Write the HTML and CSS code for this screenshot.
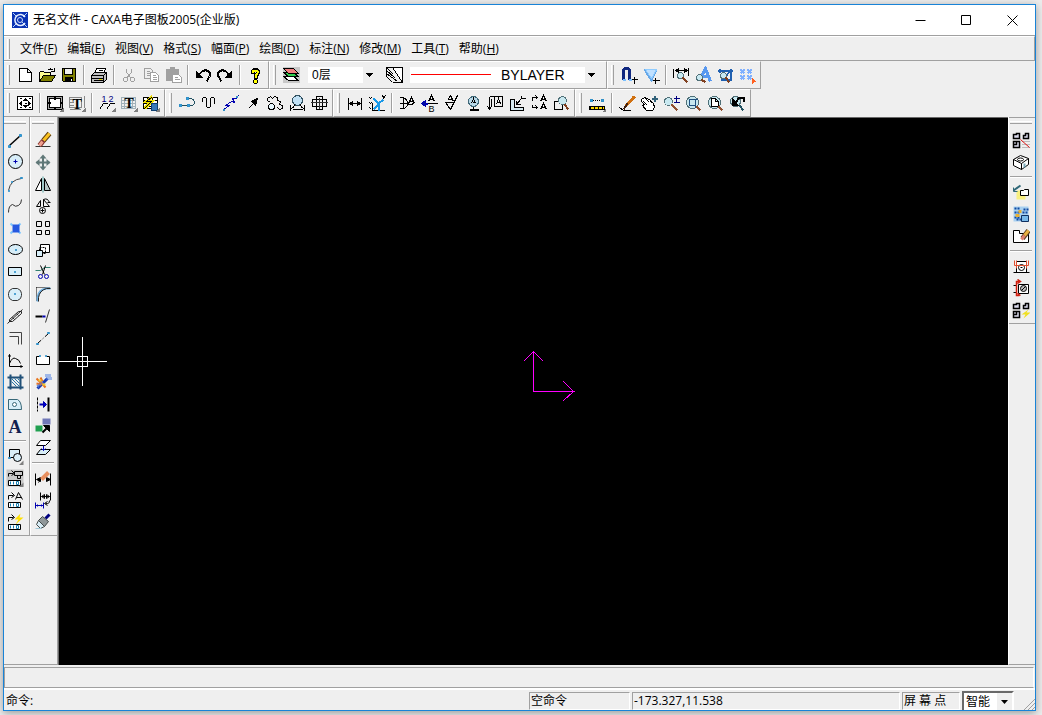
FILE: index.html
```html
<!DOCTYPE html>
<html lang="zh-CN">
<head>
    <meta charset="UTF-8">
    <meta name="viewport" content="width=device-width, initial-scale=1.0">
    <title>无名文件 - CAXA电子图板2005(企业版)</title>
    <link rel="stylesheet" href="styles.css">
</head>
<body>
    <div class="window">
        <header class="titlebar">
            <svg class="logo" viewBox="0 0 16 16"><rect width="16" height="16" fill="#0a32b4" stroke="none"/><path d="M1 1l4 4M15 1l-4 4M1 15l4-4M10 10l5 5" stroke="#b8d4f8"/><path d="M13 5a5.500 5.500 0 1 0 0 6" stroke="#e8f0ff" stroke-width="1.500"/><circle cx="8" cy="8" r="2.500" stroke="#cfe0ff"/></svg>
            <h1>无名文件 - CAXA电子图板2005(企业版)</h1>
            <div class="caption-buttons">
                <button type="button" aria-label="最小化"><svg viewBox="-.5 -.5 11 11"><path d="M0 5h10"/></svg></button>
                <button type="button" aria-label="最大化"><svg viewBox="-.5 -.5 11 11"><path d="M0 0h9v9H0z"/></svg></button>
                <button type="button" aria-label="关闭"><svg viewBox="-.5 -.5 11 11"><path d="M0 0l10 10M10 0L0 10"/></svg></button>
            </div>
        </header>

        <nav class="menubar">
            <span class="grip"></span>
            <a href="#">文件(<u>F</u>)</a>
            <a href="#">编辑(<u>E</u>)</a>
            <a href="#">视图(<u>V</u>)</a>
            <a href="#">格式(<u>S</u>)</a>
            <a href="#">幅面(<u>P</u>)</a>
            <a href="#">绘图(<u>D</u>)</a>
            <a href="#">标注(<u>N</u>)</a>
            <a href="#">修改(<u>M</u>)</a>
            <a href="#">工具(<u>T</u>)</a>
            <a href="#">帮助(<u>H</u>)</a>
        </nav>

        <div class="toolbar-row">
            <!-- 标准工具栏 -->
            <div class="band">
                <span class="grip"></span>
                <button type="button" aria-label="新建"><svg viewBox="-.5 -.5 18 18"><path class="white" d="M3 2h8l4 4v9H3zM11 2v4h4"/></svg></button>
                <button type="button" aria-label="打开"><svg viewBox="-.5 -.5 18 18"><path d="M1 15V6l1-1h3l1 1h6v3" fill="#ffff90"/><path d="M1 15l4-6h12l-4 6z" fill="#808000"/><path d="M9 4q3-3 6 0M16 1v4h-4"/></svg></button>
                <button type="button" aria-label="保存"><svg viewBox="-.5 -.5 18 18"><path d="M2 2h13v13H3l-1-1z" fill="#808000"/><path d="M4 2h8v6H4z" fill="#efefef"/><path class="ink" d="M5 11h7v4H5z"/><path d="M11 12v2" stroke="#fff"/></svg></button>
                <span class="sep"></span>
                <button type="button" aria-label="打印"><svg viewBox="-.5 -.5 18 18"><path class="white" d="M6 2h9l-2 5H4z"/><path d="M8 4h4M7 6h4"/><path d="M1 9l3-3h12v7l-3 3H1z" fill="#c0c0c0"/><path d="M1 9h12v7M13 9l3-3M1 12h12M3 14h9"/><path d="M8 13h3" stroke="#e0d000"/></svg></button>
                <span class="sep"></span>
                <button type="button" aria-label="剪切" disabled><svg class="off" viewBox="-.5 -.5 18 18"><path d="M6 2v4l5 6M11 2v4l-5 6"/><circle cx="5" cy="13" r="2"/><circle cx="12" cy="13" r="2"/></svg></button>
                <button type="button" aria-label="复制" disabled><svg class="off" viewBox="-.5 -.5 18 18"><path d="M2 2h6l2 2v8H2zM4 5h3M4 7h4M4 9h4"/><path class="white" d="M8 6h5l3 3v6H8z"/><path d="M10 9h3M10 11h4M10 13h4"/></svg></button>
                <button type="button" aria-label="粘贴" disabled><svg class="off" viewBox="-.5 -.5 18 18"><path d="M2 3h12v11H2zM6 1h4v3H6z" fill="#a0a0a0"/><path class="white" d="M8 8h6l3 3v5H8z"/><path d="M10 11h3M10 13h5"/></svg></button>
                <span class="sep"></span>
                <button type="button" aria-label="撤销"><svg viewBox="-.5 -.5 18 18"><path class="bold" d="M4 9q4-6 8-5 5 2 3 6l-3 5"/><path class="ink" d="M2 5v6h6z"/></svg></button>
                <button type="button" aria-label="重做"><svg viewBox="-.5 -.5 18 18"><path class="bold" d="M13 9Q9 3 5 4 0 6 2 10l3 5"/><path class="ink" d="M15 5v6H9z"/></svg></button>
                <span class="sep"></span>
                <button type="button" aria-label="帮助"><svg viewBox="-.5 -.5 18 18"><path d="M6 7V5q2-3 5-1q2 3-2 5v3" stroke-width="4"/><path d="M6 6V5q2-2 5 0q1 2-2 4v2" stroke="#ff0" stroke-width="2"/><circle cx="9" cy="15" r="2" fill="#ff0"/></svg></button>
            </div>
            <!-- 颜色图层线型 -->
            <div class="band">
                <span class="grip"></span>
                <button type="button" aria-label="层控制"><svg viewBox="-.5 -.5 18 18"><rect class="none" x="0" y="0" width="17" height="16" fill="#c8c8c8"/><path class="white" d="M1 10h10l5 4H6z"/><path d="M1 6h10l5 4H6z" fill="#30d050"/><path d="M1 2h10l5 5H6z" fill="#f08080"/></svg></button>
                <label class="combo layer-combo">
                    <select aria-label="当前图层"><option>0层</option></select>
                    <span class="drop"><svg viewBox="0 0 7 4"><path class="ink none" d="M0 0h7L3.500 4z"/></svg></span>
                </label>
                <button type="button" aria-label="线型"><svg viewBox="-.5 -.5 18 18"><path class="white" d="M7 1h10v15z"/><path d="M1 1h6l10 15H7M1 1l7 7M1 4l9 8M1 7l11 8M1 10l6 6M1 1v2M1 4v2M1 7v2"/></svg></button>
                <label class="combo line-combo">
                    <select aria-label="线型选择"><option>BYLAYER</option></select>
                    <span class="line-sample"></span>
                    <span class="drop"><svg viewBox="0 0 7 4"><path class="ink none" d="M0 0h7L3.500 4z"/></svg></span>
                </label>
            </div>
            <!-- 捕捉设置 -->
            <div class="band">
                <span class="grip"></span>
                <button type="button" aria-label="捕捉点"><svg viewBox="-.5 -.5 18 18"><path d="M3 13V5q0-3 3-3t3 3v8" stroke="#102880" stroke-width="3"/><path d="M2 13h3M8 13h3" stroke="#7ac0ff" stroke-width="2"/><path d="M14 10v7M11 13h6"/></svg></button>
                <button type="button" aria-label="过滤设置"><svg viewBox="-.5 -.5 18 18"><path d="M2 3l7 11 5-11M6 3l3 6" stroke="#68a8e8" stroke-width="2"/><path d="M3 3h11l-5 9z" fill="#c0e0ff" stroke="#90ccff"/><path d="M13 11v6M10 14h7"/></svg></button>
                <span class="sep"></span>
                <button type="button" aria-label="查询距离"><svg viewBox="-.5 -.5 18 18"><path d="M1 2v9M16 1v8M3 4h12M3 4l3-2v4zM15 4l-3-2v4z"/><circle class="glass" cx="8" cy="9" r="3"/><path d="M10 11l5 5" stroke="#804020" stroke-width="2"/></svg></button>
                <button type="button" aria-label="查询属性"><svg viewBox="-.5 -.5 18 18"><path d="M5 14L11 2l5 13M8 10h6" stroke="#5898f0" stroke-width="3"/><circle class="glass" cx="5" cy="11" r="3"/><path d="M7 13l4 3" stroke="#804020" stroke-width="2"/></svg></button>
                <button type="button" aria-label="查询面积"><svg viewBox="-.5 -.5 18 18"><path d="M1 4h15M3 2v4M4 13h11M14 2v12M14 4l-5 6" stroke="#2060b0" stroke-width="2"/><circle class="glass" cx="7" cy="9" r="3"/><path d="M9 11l4 5" stroke="#804020" stroke-width="2"/></svg></button>
                <button type="button" aria-label="查询坐标"><svg viewBox="-.5 -.5 18 18"><path d="M2 3l4 4M6 3L2 7M9 3l4 4M13 3L9 7M2 9l4 4M6 9l-4 4M9 9l4 4M13 9l-4 4" stroke="#80b0ff" stroke-width="2"/><path class="none" d="M13 11l4 4-4 3z" fill="#ff6020"/></svg></button>
            </div>
        </div>

        <div class="toolbar-row">
            <!-- 图幅操作 -->
            <div class="band">
                <span class="grip"></span>
                <button type="button" aria-label="图纸幅面"><svg viewBox="-.5 -.5 18 18"><path class="white" d="M1 2h15v13H1z"/><path class="ink" d="M7 6l2-2 2 2zM7 11l2 2 2-2zM5 7L3 9l2 2zM12 7l2 2-2 2z"/><path d="M8 9h2M3 4h2M12 4h2M3 13h2M12 13h2"/></svg></button>
                <span class="sep"></span>
                <button type="button" aria-label="图框设置"><svg viewBox="-.5 -.5 18 18"><path d="M1 2h15v13H1z" fill="#a8a8a8"/><path class="white" d="M3 4h11v9H3z"/><path class="bold" d="M8 2v3M8 12v3M1 8h3M13 8h3"/><path class="fly" d="M17 13v5h-5z"/></svg></button>
                <button type="button" aria-label="标题栏"><svg viewBox="-.5 -.5 18 18"><path d="M1 3h12v10H1zM16 1v12M1 15h11" stroke="#888"/><path d="M1 5h4M1 8h4M1 11h4" stroke="#888"/><text class="serif" x="4" y="14">T</text><path class="fly" d="M17 13v5h-5z"/></svg></button>
                <span class="sep"></span>
                <button type="button" aria-label="零件序号"><svg viewBox="-.5 -.5 18 18"><text class="num" x="3" y="7">1</text><text class="num" x="10" y="7">2</text><path d="M1 15l4-6h4M8 15l4-6h4"/><path class="fly" d="M17 13v5h-5z"/></svg></button>
                <button type="button" aria-label="明细表"><svg viewBox="-.5 -.5 18 18"><path d="M1 3h14v11H1zM1 6h14M1 9h14M1 12h14M4 3v11M12 3v11" stroke="#a0b0b8"/><text class="serif" x="4" y="13">T</text><path class="fly" d="M17 13v5h-5z"/></svg></button>
                <button type="button" aria-label="明细表数据库"><svg viewBox="-.5 -.5 18 18"><path class="white" d="M1 3h14v11H1z"/><path d="M1 6h14M1 9h14M1 12h14M5 3v11M10 3v11"/><path d="M10 2L4 7h5l-7 7" stroke="#f0e000" stroke-width="3"/><path d="M10 2L4 7h5l-7 7"/><path d="M9 9h6v7H9z" fill="#3878b8" stroke="#104070"/><path class="fly" d="M17 13v5h-5z"/></svg></button>
            </div>
            <!-- 绘图工具II -->
            <div class="band">
                <span class="grip"></span>
                <button type="button" aria-label="轮廓线"><svg viewBox="-.5 -.5 18 18"><path d="M2 11h8M9 4h3q4 1 4 4t-4 3h-2" stroke="#205060"/><path class="node" d="M1 10h2v2H1zM9 10h2v2H9zM8 3h2v2H8z"/></svg></button>
                <button type="button" aria-label="波浪线"><svg viewBox="-.5 -.5 18 18"><path d="M2 7V5q0-2 2-2t2 2v6q0 2 2 2t2-2V5q0-2 2-2t2 2v4"/></svg></button>
                <button type="button" aria-label="双折线"><svg viewBox="-.5 -.5 18 18"><path class="blue" d="M1 15l6-4H3l6-4 3 1-2-4h4l2-3"/><path class="node" d="M1 15h1v1H1zM14 2h1v1h-1z"/></svg></button>
                <button type="button" aria-label="箭头"><svg viewBox="-.5 -.5 18 18"><path d="M4 14l7-7"/><path class="ink" d="M13 4l-6 3 4 4z"/></svg></button>
                <button type="button" aria-label="齿轮"><svg viewBox="-.5 -.5 18 18"><path d="M1 6V4l3-2 2 2 2-2 3 1v3l3 1-1 3 3 1v3l-3 1-2-2M1 6l3 2"/><circle cx="5" cy="12" r="3" fill="#e8f8ff"/></svg></button>
                <button type="button" aria-label="圆弧拟合"><svg viewBox="-.5 -.5 18 18"><circle cx="9" cy="6" r="5" fill="#c0e0f4" stroke="#305060"/><path d="M2 10v6M2 14q3 0 4-4M16 10v6M16 14q-3 0-4-4M4 15h10"/></svg></button>
                <button type="button" aria-label="孔轴"><svg viewBox="-.5 -.5 18 18"><path d="M2 5h14v7H2zM6 2h6v13H6z"/><path d="M0 8h18M9 3v11" stroke="#333"/></svg></button>
            </div>
            <!-- 标注工具 -->
            <div class="band">
                <span class="grip"></span>
                <button type="button" aria-label="尺寸标注"><svg viewBox="-.5 -.5 18 18"><path d="M3 9h11M2 3v12M15 3v12"/><path class="ink" d="M3 9l3-2v4zM14 9l-3-2v4z"/></svg></button>
                <button type="button" aria-label="坐标标注"><svg viewBox="-.5 -.5 18 18"><path d="M4 8v8h12M1 3l2 2M3 3L1 5M1 8l2 2M3 8l-2 2M14 1l1 2M17 1l-3 4M1 13l2 2"/><path d="M10 16V9l5-4M10 10l-5 5M5 4l5 5" stroke="#1898e8" stroke-width="2"/></svg></button>
                <span class="sep"></span>
                <button type="button" aria-label="倒角标注"><svg viewBox="-.5 -.5 18 18"><path d="M1 3h4q4 2 4 6t-4 5H1M5 3v11M1 9h7l4 1 4-1M10 9l3-6 3 6M11 7h4"/></svg></button>
                <button type="button" aria-label="引出说明"><svg viewBox="-.5 -.5 18 18"><path d="M8 7l3-6 3 6M9 5h4M6 9h11"/><path d="M1 9h6" class="blue bold"/><path class="blue" d="M1 9l4-3v6z" fill="#0010a0"/><text class="letter" x="8" y="17">B</text></svg></button>
                <button type="button" aria-label="粗糙度"><svg viewBox="-.5 -.5 18 18"><path d="M3 8h9M3 8l5 7 7-14M5 6l3-5 3 6M6 5h4"/></svg></button>
                <button type="button" aria-label="基准代号"><svg viewBox="-.5 -.5 18 18"><circle cx="9" cy="7" r="5" fill="#b8d8e8" stroke="#406878"/><path d="M7 9l2-5 2 5M8 8h2M9 12v3"/><path class="bold" d="M5 15h9"/></svg></button>
                <button type="button" aria-label="形位公差"><svg viewBox="-.5 -.5 18 18"><path d="M3 2h13v10H8V2M3 2v12M1 12l2 3 2-3M5 4v7M10 10l2-6 2 6M11 8h3"/></svg></button>
                <button type="button" aria-label="焊接符号"><svg viewBox="-.5 -.5 18 18"><path d="M2 5h4v8h9v3H2z" fill="#d8eaf0"/><path d="M13 4L8 10M8 6v4h4M13 4h4M13 4V1"/></svg></button>
                <button type="button" aria-label="标注修改"><svg viewBox="-.5 -.5 18 18"><path d="M2 6V3h5M5 1l2 2-2 2M2 10v3h5M5 11l2 2-2 2M10 7l3-6 3 6M11 5h4M10 15l3-6 3 6M11 13h4"/></svg></button>
                <button type="button" aria-label="标注查看"><svg viewBox="-.5 -.5 18 18"><path d="M2 7h8v8H2z"/><circle class="glass" cx="10" cy="6" r="4"/><path d="M12 10l4 5" stroke="#804020" stroke-width="2"/></svg></button>
            </div>
            <!-- 常用工具 -->
            <div class="band">
                <span class="grip"></span>
                <button type="button" aria-label="两点距离"><svg viewBox="-.5 -.5 18 18"><path d="M2 6h13" stroke-dasharray="1 1"/><path class="node" d="M2 5h2v2H2zM13 5h2v2h-2z"/><path class="ink" d="M1 12h15v3H1z"/><path d="M2 13h13" stroke="#ffd800" stroke-width="2" stroke-dasharray="3 1"/><path class="fly" d="M18 13v5h-5z"/></svg></button>
                <span class="sep"></span>
                <button type="button" aria-label="重画"><svg viewBox="-.5 -.5 18 18"><path d="M1 13l4 3h7"/><path d="M16 2L8 11" stroke="#d07010" stroke-width="3"/><path d="M9 9l-4 6" stroke="#402010" stroke-width="2"/></svg></button>
                <button type="button" aria-label="动态平移"><svg viewBox="-.5 -.5 18 18"><path class="white" d="M1 5l3-2 5 2 2 2 2 2 1 4-2 3H6l-4-5 2-1-3-3z"/><path d="M4 3l5 5M3 7l4 4M9 5l3 4"/><path d="M14 1v6M11 4h6" stroke="#306078" stroke-width="2"/></svg></button>
                <button type="button" aria-label="动态缩放"><svg viewBox="-.5 -.5 18 18"><circle class="glass" cx="6" cy="7" r="4"/><path d="M9 10l6 6" stroke="#905030" stroke-width="2"/><path d="M14 1v6M11 4h6M11 8h6" stroke="#000080"/></svg></button>
                <button type="button" aria-label="窗口缩放"><svg viewBox="-.5 -.5 18 18"><circle class="glass" cx="8" cy="8" r="6"/><path d="M5 5h6v6H5zM4 5h9M11 4v9" stroke="#205080"/><path d="M12 12l4 4" stroke="#905030" stroke-width="2"/></svg></button>
                <button type="button" aria-label="显示全部"><svg viewBox="-.5 -.5 18 18"><circle class="glass" cx="8" cy="8" r="6"/><path class="white" d="M5 4h4l3 3v5H5zM9 4v3h3"/><path d="M12 12l4 4" stroke="#905030" stroke-width="2"/></svg></button>
                <button type="button" aria-label="显示回溯"><svg viewBox="-.5 -.5 18 18"><circle class="glass" cx="7" cy="7" r="5"/><path class="bold" d="M7 8l4-5h4v4"/><path class="ink" d="M4 4v7h6z"/><path d="M11 11l4 5" stroke="#205060" stroke-width="2"/></svg></button>
            </div>
        </div>

        <main class="workspace">
            <div class="docks">
                <!-- 绘图工具 -->
                <div class="dock">
                    <span class="grip"></span>
                    <button type="button" aria-label="直线"><svg viewBox="-.5 -.5 18 18"><path d="M3 14L14 4" stroke-width="1.500"/><path class="node" d="M2 14h2v2H2zM13 3h2v2h-2z"/></svg></button>
                    <button type="button" aria-label="圆"><svg viewBox="-.5 -.5 18 18"><circle class="lite" cx="9" cy="8" r="7"/><path class="blue" d="M9 6v4M7 8h4"/></svg></button>
                    <button type="button" aria-label="圆弧"><svg viewBox="-.5 -.5 18 18"><path d="M2 15Q4 4 15 3" stroke="#444"/><path class="node" d="M2 15h1v1H2zM5 6h1v1H5zM14 2h2v1h-2z"/></svg></button>
                    <button type="button" aria-label="样条"><svg viewBox="-.5 -.5 18 18"><path d="M2 15q0-7 4-8 3 3 6 1 3-2 3-6" stroke="#333"/></svg></button>
                    <button type="button" aria-label="点"><svg viewBox="-.5 -.5 18 18"><path d="M4 4l2 2M14 4l-2 2M4 14l2-2M14 14l-2-2" stroke="#80c8ff" stroke-width="2"/><path class="none" d="M6 5h7v8H6z" fill="#2458e0"/></svg></button>
                    <button type="button" aria-label="椭圆"><svg viewBox="-.5 -.5 18 18"><ellipse class="lite" cx="9" cy="8" rx="7" ry="5"/><path class="node" d="M9 8h1v1H9z"/></svg></button>
                    <button type="button" aria-label="矩形"><svg viewBox="-.5 -.5 18 18"><path class="lite" d="M2 4h13v8H2z"/><path class="node" d="M8 8h1v1H8z"/></svg></button>
                    <button type="button" aria-label="正多边形"><svg viewBox="-.5 -.5 18 18"><path class="lite" d="M6 3h5l3 2 1 3v2l-1 3-3 2H6l-3-2-1-3V8l1-3z" stroke="#333"/><path class="node" d="M8 8h1v1H8z"/></svg></button>
                    <button type="button" aria-label="中心线"><svg viewBox="-.5 -.5 18 18"><path d="M3 12l9-8h3v2l-9 8H3zM1 16L16 2M6 10l2 2M10 6l2 2" stroke="#222"/></svg></button>
                    <button type="button" aria-label="等距线"><svg viewBox="-.5 -.5 18 18"><path d="M3 3h12v12M3 7h9v8" stroke="#444"/></svg></button>
                    <button type="button" aria-label="公式曲线"><svg viewBox="-.5 -.5 18 18"><path d="M3 3v12h13M2 5l1-2 1 2M14 14l2 1-2 1M3 12q3-7 6-5 4 1 5 5"/></svg></button>
                    <button type="button" aria-label="剖面线"><svg viewBox="-.5 -.5 18 18"><path d="M1 4h16M1 14h16M4 1v15M14 1v15" stroke="#205078" stroke-width="2"/><path d="M5 8l5 5M5 5l8 8M8 5l5 5M11 5l2 2" stroke="#2878a8"/></svg></button>
                    <button type="button" aria-label="填充"><svg viewBox="-.5 -.5 18 18"><path class="lite" d="M2 4h9q4 2 4 10H2z" stroke="#386878"/><circle cx="8" cy="9" r="2" stroke="#386878" fill="#fff"/></svg></button>
                    <button type="button" aria-label="文字"><svg viewBox="-.5 -.5 18 18"><text class="big-a" x="2" y="15">A</text></svg></button>
                    <span class="sep"></span>
                    <button type="button" aria-label="块操作"><svg viewBox="-.5 -.5 18 18"><path class="lite" d="M3 2h10v8H3z"/><circle class="lite" cx="11" cy="10" r="4"/><path class="node" d="M2 10h2v1H2z"/><path class="fly" d="M17 13v5h-5z"/></svg></button>
                    <button type="button" aria-label="图库"><svg viewBox="-.5 -.5 18 18"><rect class="none" x="0" y="0" width="17" height="17" fill="#c8c8c8"/><path d="M2 7V4h5M5 1l3 3-3 2M8 2h8v4H8zM11 6h3v3h-3z"/><path class="white" d="M2 11h12v5H2z"/><path d="M4 12v3M7 12v3M10 12h2v3h-2z" stroke="#1880b0"/><path class="fly" d="M17 13v5h-5z"/></svg></button>
                    <button type="button" aria-label="文字库"><svg viewBox="-.5 -.5 18 18"><path d="M2 8V4h5M5 1l3 3-3 2M9 8l3-7 4 7M10 6h5"/><path class="white" d="M2 11h12v5H2z"/><path d="M4 12v3M7 12v3M10 12h2v3h-2z" stroke="#1880b0"/></svg></button>
                    <button type="button" aria-label="快捷库"><svg viewBox="-.5 -.5 18 18"><path d="M2 8V4h5M5 1l3 3-3 2"/><path class="none" d="M14 0L8 6h4l-3 5 8-7h-4z" fill="#ffe000"/><path class="white" d="M2 11h12v5H2z"/><path d="M4 12v3M7 12v3M10 12h2v3h-2z" stroke="#1880b0"/></svg></button>
                </div>
                <!-- 编辑工具 -->
                <div class="dock">
                    <span class="grip"></span>
                    <button type="button" aria-label="删除"><svg viewBox="-.5 -.5 18 18"><path d="M1 15h15" stroke="#333"/><path d="M15 2L9 9" stroke="#604010" stroke-width="5"/><path d="M15 2L9 9" stroke="#f8c020" stroke-width="3"/><path d="M9 9l-4 5" stroke="#803028" stroke-width="5"/><path d="M8 10l-3 4" stroke="#f0a090" stroke-width="3"/></svg></button>
                    <button type="button" aria-label="平移"><svg viewBox="-.5 -.5 18 18"><path d="M8.500 3v12M2 9h13" stroke="#607878" stroke-width="2"/><path class="none" d="M5 5l3.500-4L12 5zM5 13l3.500 4 3.500-4zM5 5.500L1 9l4 3.500zM12 5.500L16 9l-4 3.500z" fill="#607878"/></svg></button>
                    <button type="button" aria-label="镜像"><svg viewBox="-.5 -.5 18 18"><path d="M7 3v12H1z" fill="#fff"/><path d="M10 3v12h6z" fill="#b8c8c8"/><path d="M8.500 1v16" stroke="#50a0a0"/></svg></button>
                    <button type="button" aria-label="旋转"><svg viewBox="-.5 -.5 18 18"><path d="M6 3v6H2zM9 2l6 7H9zM9 2q4-2 6 3M13 5h3"/><circle class="white" cx="8" cy="13" r="3"/><path d="M8 11v4M6 13h4"/></svg></button>
                    <button type="button" aria-label="阵列"><svg viewBox="-.5 -.5 18 18"><path d="M2 2h5v5H2zM11 2h4v5h-4zM2 11h5v4H2zM11 11h4v4h-4z"/></svg></button>
                    <button type="button" aria-label="比例缩放"><svg viewBox="-.5 -.5 18 18"><path class="white" d="M6 3h9v8H6z"/><path class="lite" d="M2 9h6v6H2z"/><path d="M5 9V6h6v6H8" stroke-dasharray="2 1"/></svg></button>
                    <button type="button" aria-label="裁剪"><svg viewBox="-.5 -.5 18 18"><path d="M1 7h5l4-3h6" stroke="#308070"/><path d="M6 2l4 9M11 2L8 11"/><circle class="blue" cx="6" cy="13" r="2"/><circle class="blue" cx="12" cy="13" r="2"/></svg></button>
                    <button type="button" aria-label="过渡"><svg viewBox="-.5 -.5 18 18"><path d="M2 2h14M2 2v14" stroke-dasharray="1 1"/><path d="M3 16V12Q4 4 12 3h4" stroke="#70b0e0" stroke-width="2"/><path d="M4 16V12Q5 5 12 3h4" stroke="#222"/></svg></button>
                    <button type="button" aria-label="齐边"><svg viewBox="-.5 -.5 18 18"><path d="M1 9h7" stroke-width="2"/><path class="blue" d="M8 9h3" stroke-width="2"/><path d="M11 15l4-13" stroke="#333"/></svg></button>
                    <button type="button" aria-label="打断"><svg viewBox="-.5 -.5 18 18"><path d="M3 14L14 4" stroke-dasharray="5 2 1 2"/><path class="node" d="M2 14h2v1H2zM13 3h2v1h-2z"/></svg></button>
                    <button type="button" aria-label="拉伸"><svg viewBox="-.5 -.5 18 18"><path class="white" d="M5 5H2v8h13V5h-3"/><path class="node" d="M5 4h1v1H5zM11 4h1v1h-1z"/></svg></button>
                    <button type="button" aria-label="打散"><svg viewBox="-.5 -.5 18 18"><path d="M3 15l10-10" stroke="#1838b0" stroke-width="3"/><path d="M2 5l4 4M6 4l2 4M2 10l5 1M5 7l6 7" stroke="#e87020" stroke-width="2"/><path d="M11 2h6M12 5h5M3 13l6-5" stroke="#5080e0" stroke-dasharray="1 1" stroke-width="3"/><path d="M4 7h3M8 11h3" stroke="#f0d030" stroke-width="2"/></svg></button>
                    <button type="button" aria-label="改变线型"><svg viewBox="-.5 -.5 18 18"><path d="M3 2v14" stroke-dasharray="3 1"/><path d="M14 2v14" stroke-width="2"/><path class="blue" d="M5 9h5" stroke-width="2"/><path class="blue" d="M9 6l3 3-3 3z" fill="#0000d0"/></svg></button>
                    <button type="button" aria-label="改变颜色"><svg viewBox="-.5 -.5 18 18"><path class="none" d="M1 8h7v6H1z" fill="#20a050"/><path class="none" d="M8 1h8v6H8z" fill="#7078b8"/><path class="bold" d="M8 15l5-5"/><path class="ink" d="M15 8v6L9 8z"/></svg></button>
                    <button type="button" aria-label="改变图层"><svg viewBox="-.5 -.5 18 18"><path class="white" d="M6 1h10l-5 5H2z"/><path class="lite" d="M6 10h10l-5 5H2z"/><path class="blue" d="M9 6v5M7 9l2 2 2-2"/></svg></button>
                    <span class="sep"></span>
                    <button type="button" aria-label="尺寸编辑"><svg viewBox="-.5 -.5 18 18"><path class="ink" d="M1 4v12M16 4v12M2 10l4-2v4zM16 10l-4-2v4z"/><path d="M14 3L7 10" stroke="#e89060" stroke-width="4"/><path d="M6 10l-2 3"/></svg></button>
                    <button type="button" aria-label="尺寸联动"><svg viewBox="-.5 -.5 18 18"><path d="M6 1v8M16 1v8M7 5h8M7 5l3-2v4zM15 5l-3-2v4zM15 9q0 4-4 3M13 10l-3 2 3 2"/><path class="blue" d="M1 11v6M9 11v6M1 14h8M3 13v2M7 13v2"/></svg></button>
                    <button type="button" aria-label="格式刷"><svg viewBox="-.5 -.5 18 18"><path d="M15 1l-4 4" stroke="#000080" stroke-width="3"/><path d="M8 3l6 5-4 5-6-6z" fill="#90989a" stroke="#404848"/><path class="lite" d="M4 7l6 6-4 2-4-4z" stroke="#404848"/><path d="M1 15h6" stroke="#a0c8d8"/></svg></button>
                </div>
            </div>

            <div class="drawing">
                <svg class="axis" viewBox="-.5 -.5 85 83"><path d="M42 41V1M32 11L42 1l10 10M42 41h41M72 31l10 10-10 9"/></svg>
                <svg class="cursor" viewBox="-.5 -.5 49 51"><path d="M23 0v49M-.5 25h48M18 20h10v10H18z"/></svg>
            </div>

            <div class="docks docks-right">
                <!-- 图库管理 -->
                <div class="dock">
                    <span class="grip"></span>
                    <button type="button" aria-label="提取图符"><svg viewBox="-.5 -.5 18 18"><g stroke-width="1.500"><path d="M1 3h3V2h3v5H1zM11 7V4h2V2h3v5z" fill="#dde"/><path d="M1 10h6v6H1zM4 10v3H1" fill="#dde"/></g><path d="M10 10h7M10 13h7M10 16h7" stroke="#888" stroke-dasharray="1 1"/><path d="M8 8l9 8" stroke="#e01010"/></svg></button>
                    <button type="button" aria-label="定义图符"><svg viewBox="-.5 -.5 18 18"><path class="white" d="M1 6l7-4 8 3v6l-7 5-8-4z"/><path d="M1 6l8 4 7-5M9 10v6"/><ellipse cx="8" cy="6" rx="3" ry="1.500"/><path d="M12 10v4" stroke="#78a8b8" stroke-width="2"/></svg></button>
                    <span class="sep"></span>
                    <button type="button" aria-label="驱动图符"><svg viewBox="-.5 -.5 18 18"><path class="none" d="M4 7h9v9H4z" fill="#f8f080"/><path class="white" d="M8 7h3l1-1h4v6H8z"/><path d="M1 7l7-5" stroke="#306878" stroke-width="2"/><path d="M1 4v4h4" stroke="#306878"/></svg></button>
                    <button type="button" aria-label="图库管理"><svg viewBox="-.5 -.5 18 18"><path class="none" d="M1 1h15v15H1z" fill="#a8d0f0"/><path d="M2 3h6M2 7h5M2 12h6M4 14h5M11 4h5M10 7h6" stroke="#1048a0" stroke-width="2" stroke-dasharray="2 1"/><path d="M3 10h4M6 6h3" stroke="#e8b030" stroke-width="3"/><path d="M9 16v-6h7v6z" fill="#78b8e8" stroke="#103060"/></svg></button>
                    <button type="button" aria-label="图符编辑"><svg viewBox="-.5 -.5 18 18"><path class="white" d="M1 3h6v3h9v9H1z"/><path d="M16 3l-6 8" stroke="#604020" stroke-width="5"/><path d="M16 3l-4 5" stroke="#e8b040" stroke-width="3"/><path d="M12 8l-3 4" stroke="#e08070" stroke-width="3"/></svg></button>
                    <span class="sep"></span>
                    <button type="button" aria-label="构件库"><svg viewBox="-.5 -.5 18 18"><path class="white" d="M4 4h10v11H4z"/><circle cx="9" cy="10" r="3"/><path d="M8 10h2M1 15h4M13 15h4"/><path d="M2 3v5h14V3" stroke="#e05030"/><path d="M4 3v8M14 3v8" stroke="#e05030"/></svg></button>
                    <button type="button" aria-label="转换图符"><svg viewBox="-.5 -.5 18 18"><path class="white" d="M6 5h10v9H6z"/><circle cx="11" cy="9" r="3" fill="#c0c0c0"/><path d="M9 11l4-4M1 6h3M1 13h3"/><path d="M7 2H4v14h3M5 0l3 2-3 2M5 14l3 2" stroke="#d02010" stroke-width="1.500"/></svg></button>
                    <button type="button" aria-label="技术要求库"><svg viewBox="-.5 -.5 18 18"><g stroke-width="1.500"><path d="M1 3h3V2h3v5H1zM11 7V4h2V2h3v5z" fill="#dde"/><path d="M1 10h6v6H1zM4 10v3H1" fill="#dde"/></g><path class="none" d="M16 8l-7 5h4l-2 4 7-6h-4z" fill="#f0e020"/></svg></button>
                </div>
            </div>
        </main>

        <div class="command"></div>

        <footer class="status">
            <span class="prompt">命令:</span>
            <span class="panel panel-cmd">空命令</span>
            <span class="panel panel-pos">-173.327,11.538</span>
            <span class="panel panel-point">屏 幕 点</span>
            <label class="combo snap-combo">
                <select aria-label="捕捉方式"><option>智能</option></select>
                <span class="drop"><svg viewBox="0 0 7 4"><path class="ink none" d="M0 0h7L3.500 4z"/></svg></span>
            </label>
            <svg class="size-grip" viewBox="0 0 12 12"><path d="M1 12L12 1M5 12l7-7M9 12l3-3"/></svg>
        </footer>
    </div>
</body>
</html>
```
FILE: styles.css
```css
* {
    box-sizing: border-box;
}

body {
    display: flex;
    height: 100vh;
    margin: 0;
    padding: 4px 6px 4px 3px;
    overflow: hidden;
    background-color: #ececec;
    color: #000;
    font-family: "Open Sans", "Noto Sans CJK SC", sans-serif;
    font-size: 12px;
    line-height: 16px;
}

.window {
    flex: 1;
    min-width: 0;
    display: flex;
    flex-direction: column;
    overflow: hidden;
    border: 1px solid #1883d7;
    background-color: #efefef;
    box-shadow: 0 2px 8px rgba(0, 0, 0, 0.35);
}

svg {
    display: block;
    fill: none;
    stroke: #000;
}

button {
    display: grid;
    place-items: center;
    width: 22px;
    height: 22px;
    padding: 0;
    border: 0;
    background: none;
}

button svg {
    width: 18px;
    height: 18px;
}

/* 标题栏 */
.titlebar {
    display: flex;
    align-items: center;
    height: 31px;
    padding-left: 8px;
    border-bottom: 1px solid #a0a0a0;
    background-color: #fff;
}

.logo {
    width: 16px;
    height: 16px;
}

.titlebar h1 {
    flex: 1;
    margin: 0 0 0 5px;
    font-size: 12px;
    font-weight: 400;
}

.caption-buttons {
    display: flex;
}

.caption-buttons button {
    width: 46px;
    height: 30px;
}

.caption-buttons svg {
    width: 11px;
    height: 11px;
}

/* 菜单 */
.menubar {
    display: flex;
    align-items: center;
    gap: 10px;
    height: 25px;
    padding-left: 3px;
    border-top: 1px solid #fff;
    border-right: 1px solid #a0a0a0;
    border-bottom: 1px solid #a0a0a0;
}

.menubar a {
    color: #000;
    text-decoration: none;
}

/* 工具栏 */
.toolbar-row {
    display: flex;
    height: 28px;
}

.toolbar-row svg {
    shape-rendering: crispEdges;
}

.band {
    display: flex;
    align-items: center;
    padding: 0 2px 0 3px;
    border-top: 1px solid #fff;
    border-right: 1px solid #a0a0a0;
    border-bottom: 1px solid #a0a0a0;
}

.band + .band {
    border-left: 1px solid #fff;
}

.grip {
    width: 3px;
    height: 20px;
    border-left: 1px solid #fff;
    border-right: 1px solid #a0a0a0;
}

.band .grip {
    margin-right: 4px;
}

.sep {
    width: 2px;
    height: 20px;
    margin: 0 3px;
    border-left: 1px solid #a0a0a0;
    border-right: 1px solid #fff;
}

.combo {
    display: grid;
    align-items: center;
    background-color: #fff;
}

.combo > * {
    grid-area: 1 / 1;
}

.combo select {
    width: 100%;
    height: 16px;
    padding: 0;
    border: 0;
    appearance: none;
    background: none;
    color: #000;
    font: 14px/16px "Liberation Sans", "Noto Sans CJK SC", sans-serif;
}

.drop {
    display: grid;
    place-items: center;
    justify-self: end;
    width: 13px;
    height: 16px;
    background-color: #efefef;
    pointer-events: none;
}

.drop svg {
    width: 7px;
    height: 4px;
}

.layer-combo {
    width: 68px;
    margin: 0 7px 0 6px;
}

.combo.layer-combo select {
    padding-left: 4px;
    font-size: 12px;
}

.line-combo {
    width: 188px;
    margin: 0 6px 0 5px;
}

.combo.line-combo select {
    padding-left: 91px;
}

.line-sample {
    width: 80px;
    height: 1px;
    margin: 0 0 2px 1px;
    background-color: #f00;
    pointer-events: none;
}

/* 图标 */
.white {
    fill: #fff;
}

.ink {
    fill: #000;
}

.none {
    stroke: none;
}

.bold {
    stroke-width: 2;
}

.lite {
    fill: #d8eef8;
}

.blue {
    stroke: #0000b0;
}

.node {
    fill: #30a0e0;
    stroke: #3090c8;
}

.glass {
    fill: #c8e8f0;
    stroke: #507078;
}

.fly {
    fill: #808080;
    stroke: none;
}

.off {
    stroke: #a0a0a0;
}

.serif,
.big-a,
.letter,
.num {
    fill: #000;
    stroke: none;
    font: bold 14px "Liberation Serif", serif;
}

.big-a {
    fill: #102050;
    font-size: 18px;
}

.letter {
    font: 9px "Liberation Sans", sans-serif;
}

.num {
    fill: #000080;
    font: 9px "Liberation Sans", sans-serif;
}

/* 工作区 */
.workspace {
    flex: 1;
    min-height: 0;
    display: flex;
    margin-bottom: 2px;
}

.docks {
    display: flex;
    align-items: flex-start;
    border-right: 1px solid #a0a0a0;
    border-bottom: 1px solid #a0a0a0;
}

.dock {
    display: flex;
    flex-direction: column;
    width: 26px;
    padding: 4px 3px 2px 0;
    border-bottom: 1px solid #a0a0a0;
}

.dock + .dock {
    width: 27px;
    padding: 4px 2px 2px 1px;
    border-left: 1px solid #fff;
    box-shadow: -1px 0 #a0a0a0;
}

.dock .grip {
    width: 22px;
    height: 3px;
    margin-bottom: 5px;
    border: 0;
    border-top: 1px solid #fff;
    border-bottom: 1px solid #a0a0a0;
}

.dock .sep {
    width: 22px;
    height: 2px;
    margin: 3px 0;
    border: 0;
    border-top: 1px solid #a0a0a0;
    border-bottom: 1px solid #fff;
}

.docks-right {
    border-right: 0;
    border-left: 1px solid #fff;
}

.docks-right .dock {
    padding: 3px 3px 2px 1px;
    border-top: 1px solid #a0a0a0;
}

.drawing {
    position: relative;
    flex: 1;
    display: grid;
    place-items: center;
    border-top: 1px solid #696969;
    border-left: 1px solid #696969;
    background-color: #000;
}

.axis {
    width: 85px;
    height: 83px;
    stroke: #f0f;
    shape-rendering: crispEdges;
}

.cursor {
    position: absolute;
    top: 218px;
    left: 0;
    width: 49px;
    height: 51px;
    stroke: #fff;
    shape-rendering: crispEdges;
}

/* 命令行与状态栏 */
.command {
    height: 21px;
    margin-right: 1px;
    border: 1px solid #a0a0a0;
    border-right-color: #fff;
}

.status {
    display: flex;
    align-items: flex-start;
    height: 22px;
    padding-top: 1px;
    border-top: 2px solid #fff;
    overflow: hidden;
}

.prompt {
    flex: 1;
    padding: 2px 0 0 2px;
}

.panel {
    height: 18px;
    margin: 1px 2px 0 0;
    padding-left: 1px;
    border: 1px solid #a0a0a0;
    border-right-color: #fff;
    border-bottom-color: #fff;
}

.panel-cmd {
    width: 101px;
}

.panel-pos {
    width: 268px;
}

.panel-point {
    width: 58px;
}

.snap-combo {
    width: 52px;
    height: 22px;
    border: 2px solid #696969;
    border-right: 2px solid #fff;
}

.combo.snap-combo select {
    padding-left: 2px;
    font-size: 12px;
}

.snap-combo .drop {
    width: 15px;
    height: 18px;
}

.size-grip {
    align-self: flex-end;
    width: 12px;
    height: 12px;
    margin: 0 0 0 9px;
    stroke: #a0a0a0;
}
```
